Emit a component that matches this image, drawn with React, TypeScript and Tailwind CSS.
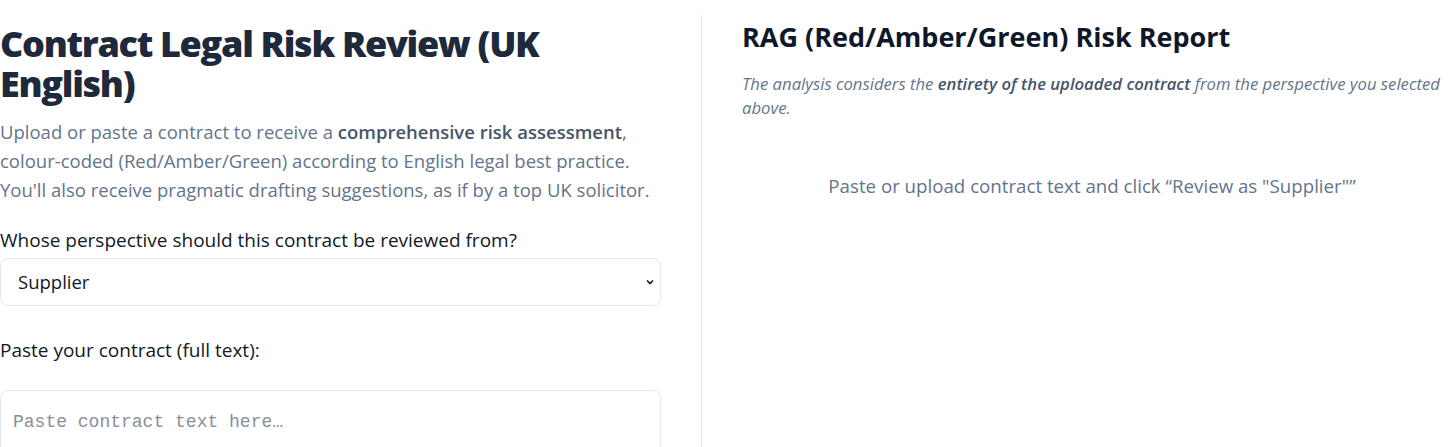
export default function App() {
  return (
    <div
      className="flex min-h-[447px] bg-white"
      style={{ fontFamily: '"Open Sans", "Noto Sans", sans-serif' }}
    >
      <div className="w-[661px] shrink-0 pt-[24px]">
        <h1 className="text-[36px] font-extrabold leading-[40px] tracking-[-0.036em] text-[#1e293b]">
          Contract Legal Risk Review (UK English)
        </h1>
        <p className="mt-[13px] text-[18.5px] leading-[29px] text-[#64748b]">
          Upload or paste a contract to receive a{" "}
          <strong className="font-semibold text-[#475569]">comprehensive risk assessment</strong>,
          colour-coded (Red/Amber/Green) according to English legal best practice. You'll also
          receive pragmatic drafting suggestions, as if by a top UK solicitor.
        </p>

        <label className="mt-[22px] block text-[19px] font-medium leading-[28px] text-[#111827]">
          Whose perspective should this contract be reviewed from?
        </label>
        <div className="relative mt-[4px]">
          <select className="h-[48px] w-full appearance-none rounded-lg border border-[#e5e7eb] bg-white pl-[17px] text-[18.5px] text-[#111827]">
            <option>Supplier</option>
            <option>Customer</option>
          </select>
          <svg
            className="pointer-events-none absolute right-[5px] top-[18px] h-[12px] w-[12px] text-[#111827]"
            viewBox="0 0 12 12"
            fill="none"
            stroke="currentColor"
            strokeWidth="1.6"
          >
            <path d="M3 4.5l3 3 3-3" />
          </svg>
        </div>

        <label className="mt-[30px] block text-[19px] font-medium leading-[28px] text-[#111827]">
          Paste your contract (full text):
        </label>
        <textarea
          className="mt-[26px] block h-[120px] w-full resize-none rounded-lg border border-[#e5e7eb] px-[12px] py-[18px] text-[18px] text-[#111827] placeholder:text-[#8a8f98]"
          style={{ fontFamily: '"Liberation Mono", "DejaVu Sans Mono", monospace' }}
          placeholder="Paste contract text here…"
        />
      </div>

      <div className="ml-[40px] mt-[15px] flex-1 border-l border-[#e5e7eb] pl-[40px] pr-[14px]">
        <h2 className="mt-[4px] text-[27px] font-bold leading-[36px] text-[#0f172a]">
          RAG (Red/Amber/Green) Risk Report
        </h2>
        <p className="mt-[17px] text-[16.7px] italic leading-[24px] text-[#64748b]">
          The analysis considers the{" "}
          <strong className="font-semibold text-[#475569]">entirety of the uploaded contract</strong>{" "}
          from the perspective you selected above.
        </p>
        <p className="mt-[52px] text-center text-[18.7px] leading-[28px] text-[#64748b]">
          Paste or upload contract text and click “Review as "Supplier"”
        </p>
      </div>
    </div>
  );
}
